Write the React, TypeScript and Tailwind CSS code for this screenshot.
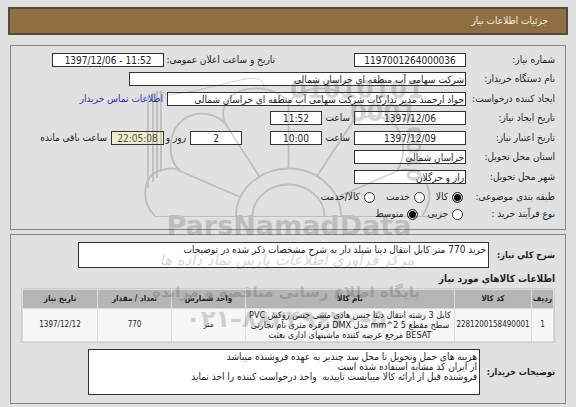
import type { ReactNode } from "react";

const ITEMS = [
  {
    row: "1",
    code: "2281200158490001",
    unit: "متر",
    amount: "770",
    date: "1397/12/12",
  },
];

const BUYER_NOTES = `هزینه های حمل وتحویل تا محل سد چندیر به عهده فروشنده میباشد
از ایران کد مشابه استفاده شده است
فروشنده قبل از ارائه کالا میبایست تاییدیه  واحد درخواست کننده را اخذ نماید`;

const fieldBase = "h-[14px] min-w-0 border border-[#333] px-px leading-3 outline-none";

type FieldProps = {
  id: string;
  value: string;
  className: string;
};

const Field = ({ id, value, className }: FieldProps) => (
  <input id={id} type="text" readOnly defaultValue={value} className={`${fieldBase} ${className}`} />
);

const Row = ({ id, label, children }: { id: string; label: string; children: ReactNode }) => (
  <div className="flex h-[14px] items-center">
    <label htmlFor={id} className="w-[89px] shrink-0 whitespace-nowrap">
      {label}
    </label>
    {children}
  </div>
);

const Radio = ({ name, label, checked }: { name: string; label: string; checked?: boolean }) => (
  <label className="flex items-center gap-1 whitespace-nowrap">
    <input
      type="radio"
      name={name}
      defaultChecked={checked}
      className="size-[11px] shrink-0 appearance-none rounded-full border border-[#333] bg-white checked:bg-black checked:shadow-[inset_0_0_0_1px_white]"
    />
    {label}
  </label>
);

const Watermark = () => (
  <svg
    viewBox="0 0 576 407"
    aria-hidden="true"
    direction="ltr"
    className="pointer-events-none absolute top-0 left-0 w-full opacity-20"
  >
    <g fill="none" stroke="#333" strokeWidth="1.8">
      <path d="M236 216.500a52.500 48 0 0 1 105 0" />
      <path d="M252.500 216.500a36 32 0 0 1 72 0" />
      <path d="M155 216.500H428" strokeWidth="1" />
      <path d="M288.500 168V98M259 176L225 123M317 176L352 123M240 197L180 171M338 197L397 171" />
      <path d="M155 216C141 203 142 178 158 171C167 168 175 167 180 171" />
      <path d="M180 171C166 158 168 130 184 119C198 110 214 113 225 123" />
      <path d="M225 123C219 109 228 94 243 90C261 86 280 90 288.500 103" />
      <path d="M288.500 103C297 90 316 86 334 90C349 94 358 109 352 123" />
      <path d="M352 123C366 113 382 114 394 124C405 135 406 158 397 171" />
      <path d="M397 171C420 163 434 188 428 204Q426 211 422 216" />
      <path d="M148 188V96M153 182V93M157 178V91M161 172V90" />
      <path d="M148 98Q158 88 168 95C195 92 221 84 245 79Q264 75 264 88" strokeWidth="1" />
    </g>
    <g fill="#333">
      <g className="font-['DejaVu_Sans'] text-[24px] font-bold">
        <text x="290" y="98">01010101</text>
        <text x="350" y="121">0001</text>
        <text transform="translate(407 126) rotate(90)" className="text-[20px]">
          0010
        </text>
      </g>
      <text x="289" y="235" textAnchor="middle" className="font-['DejaVu_Sans'] text-[27px] font-bold">
        ParsNamadData
      </text>
      <g className="font-['DejaVu_Sans']">
        <text x="287" y="265" textAnchor="middle" className="text-[15px] italic">
          مرکز فرآوری اطلاعات پارس نماد داده ها
        </text>
        <text x="286" y="297" textAnchor="middle" className="text-[15px] font-bold">
          پایگاه اطلاع رسانی مناقصه و مزایده
        </text>
        <text x="286" y="327" textAnchor="middle" className="text-[24px] font-bold">
          ۰۲۱–۸۸۳۴۹۶۷۰–۵
        </text>
      </g>
    </g>
  </svg>
);

const App = () => {
  return (
    <div
      dir="rtl"
      lang="fa"
      className="relative min-h-screen bg-[#e1e1e1] px-2 pt-[7px] pb-0.5 font-['DejaVu_Sans_Condensed','DejaVu_Sans',sans-serif] text-[10px] leading-[14px] text-[#222]"
    >
      <header className="flex h-7 items-center border-2 border-[#554a40] bg-[#916e42] px-[18px] text-[#f4efe8]">
        <h1>جزئیات اطلاعات نیاز</h1>
      </header>

      <main className="mx-0.5 mt-2.5 flex flex-col gap-1">
        <section className="flex flex-col gap-1.5 border border-[#888] px-[10px] pt-[7px] pb-2">
          <div className="flex flex-col gap-[5px]">
            <Row id="number" label="شماره نیاز:">
              <Field id="number" value="1197001264000036" className="w-28 bg-white text-center" />
              <label htmlFor="announce" className="mr-[79px] w-[111px] whitespace-nowrap">
                تاریخ و ساعت اعلان عمومی:
              </label>
              <input
                id="announce"
                type="text"
                dir="ltr"
                readOnly
                defaultValue="1397/12/06 - 11:52"
                className={`${fieldBase} w-28 bg-white text-center`}
              />
            </Row>
            <Row id="buyer" label="نام دستگاه خریدار:">
              <Field id="buyer" value="شرکت سهامی آب منطقه ای خراسان شمالی" className="w-[337px] bg-white" />
            </Row>
          </div>

          <div className="flex flex-col gap-[5px]">
            <Row id="creator" label="ایجاد کننده درخواست:">
              <Field
                id="creator"
                value="جواد ارجمند مدیر تدارکات شرکت سهامی آب منطقه ای خراسان شمالی"
                className="w-[299px] bg-white"
              />
              <a href="#contact" className="mr-1 whitespace-nowrap text-[#3030b8]">
                اطلاعات تماس خریدار
              </a>
            </Row>
            <Row id="created" label="تاریخ ایجاد نیاز:">
              <Field id="created" value="1397/12/06" className="w-28 bg-white text-center" />
              <label htmlFor="createdTime" className="w-8 px-1">
                ساعت
              </label>
              <Field id="createdTime" value="11:52" className="w-[52px] bg-white text-center" />
            </Row>
          </div>

          <div className="flex flex-col gap-[5px]">
            <Row id="expires" label="تاریخ اعتبار نیاز:">
              <Field id="expires" value="1397/12/09" className="w-28 bg-white text-center" />
              <label htmlFor="expiresTime" className="w-8 px-1">
                ساعت
              </label>
              <Field id="expiresTime" value="10:00" className="w-[52px] bg-white text-center" />
              <Field id="days" value="2" className="mr-7 w-[52px] bg-white text-center" />
              <label htmlFor="days" className="w-[26px] px-1 whitespace-nowrap">
                روز و
              </label>
              <Field id="left" value="22:05:08" className="w-[53px] bg-[#efefcd] text-center text-[#555]" />
              <label htmlFor="left" className="mr-1 whitespace-nowrap">
                ساعت باقی مانده
              </label>
            </Row>
            <Row id="province" label="استان محل تحویل:">
              <Field id="province" value="خراسان شمالی" className="w-28 bg-white" />
            </Row>
          </div>

          <Row id="city" label="شهر محل تحویل:">
            <Field id="city" value="راز و جرگلان" className="w-28 bg-white" />
          </Row>

          <div className="flex flex-col gap-[3px]">
            <div role="radiogroup" aria-label="طبقه بندی موضوعی" className="flex h-[14px] items-center">
              <span className="w-[92px] shrink-0">طبقه بندی موضوعی:</span>
              <div className="flex gap-[11px]">
                <Radio name="subject" label="کالا" checked />
                <Radio name="subject" label="خدمت" />
                <Radio name="subject" label="کالا/خدمت" />
              </div>
            </div>
            <div role="radiogroup" aria-label="نوع فرآیند خرید" className="flex h-[14px] items-center">
              <span className="w-[92px] shrink-0">نوع فرآیند خرید :</span>
              <div className="flex gap-[9px]">
                <Radio name="process" label="جزیی" />
                <Radio name="process" label="متوسط" checked />
              </div>
            </div>
          </div>
        </section>

        <section className="border border-[#888] px-[10px] pt-[7px] pb-2">
          <div className="flex items-center">
            <label htmlFor="summary" className="w-[66px] shrink-0 text-[9px] font-bold whitespace-nowrap">
              شرح کلي نياز:
            </label>
            <textarea
              id="summary"
              readOnly
              defaultValue="خرید 770 متر کابل انتقال دیتا شیلد دار به شرح مشخصات ذکر شده در توضیحات"
              className="ml-[57px] block h-[26px] min-w-0 flex-1 resize-none overflow-hidden border border-[#333] bg-white px-0.5 leading-[14px] outline-none"
            />
          </div>

          <h2 className="mt-1 mb-0.5 font-bold">اطلاعات کالاهاي مورد نياز</h2>

          <table className="w-full table-fixed border-separate border-spacing-px border border-[#ccc] bg-[#dcdcdc] text-center text-[8px]">
            <thead>
              <tr className="h-[18px] bg-[#b5b5b5] leading-3 whitespace-nowrap">
                <th className="w-[21px]">ردیف</th>
                <th className="w-[76px]">کد کالا</th>
                <th>نام کالا</th>
                <th className="w-[73px]">واحد شمارش</th>
                <th className="w-[73px]">تعداد / مقدار</th>
                <th className="w-[74px]">تاریخ نیاز</th>
              </tr>
            </thead>
            <tbody>
              {ITEMS.map((item) => (
                <tr key={item.code} className="h-8 bg-[#f6f6f6] leading-[10px] whitespace-nowrap">
                  <td>{item.row}</td>
                  <td>{item.code}</td>
                  <td className="text-[9px]">
                    کابل 3 رشته انتقال دیتا جنس هادی مسی جنس روکش PVC
                    <br />
                    سطح مقطع <bdi dir="ltr">mm^2 5</bdi> مدل DMX قرقره متری نام تجارتی
                    <br />
                    BESAT مرجع عرضه کننده ماشینهای اداری بعثت
                  </td>
                  <td>{item.unit}</td>
                  <td>{item.amount}</td>
                  <td>{item.date}</td>
                </tr>
              ))}
            </tbody>
          </table>

          <div className="mt-1.5 flex items-center">
            <label htmlFor="notes" className="w-[75px] shrink-0 text-[9px] font-bold whitespace-nowrap">
              توضيحات خريدار:
            </label>
            <textarea
              id="notes"
              readOnly
              defaultValue={BUYER_NOTES}
              className="ml-[67px] block h-[46px] min-w-0 flex-1 resize-none overflow-hidden border border-[#333] bg-white px-0.5 pt-0.5 leading-[10px] outline-none"
            />
          </div>
        </section>
      </main>

      <Watermark />
    </div>
  );
};

export default App;
